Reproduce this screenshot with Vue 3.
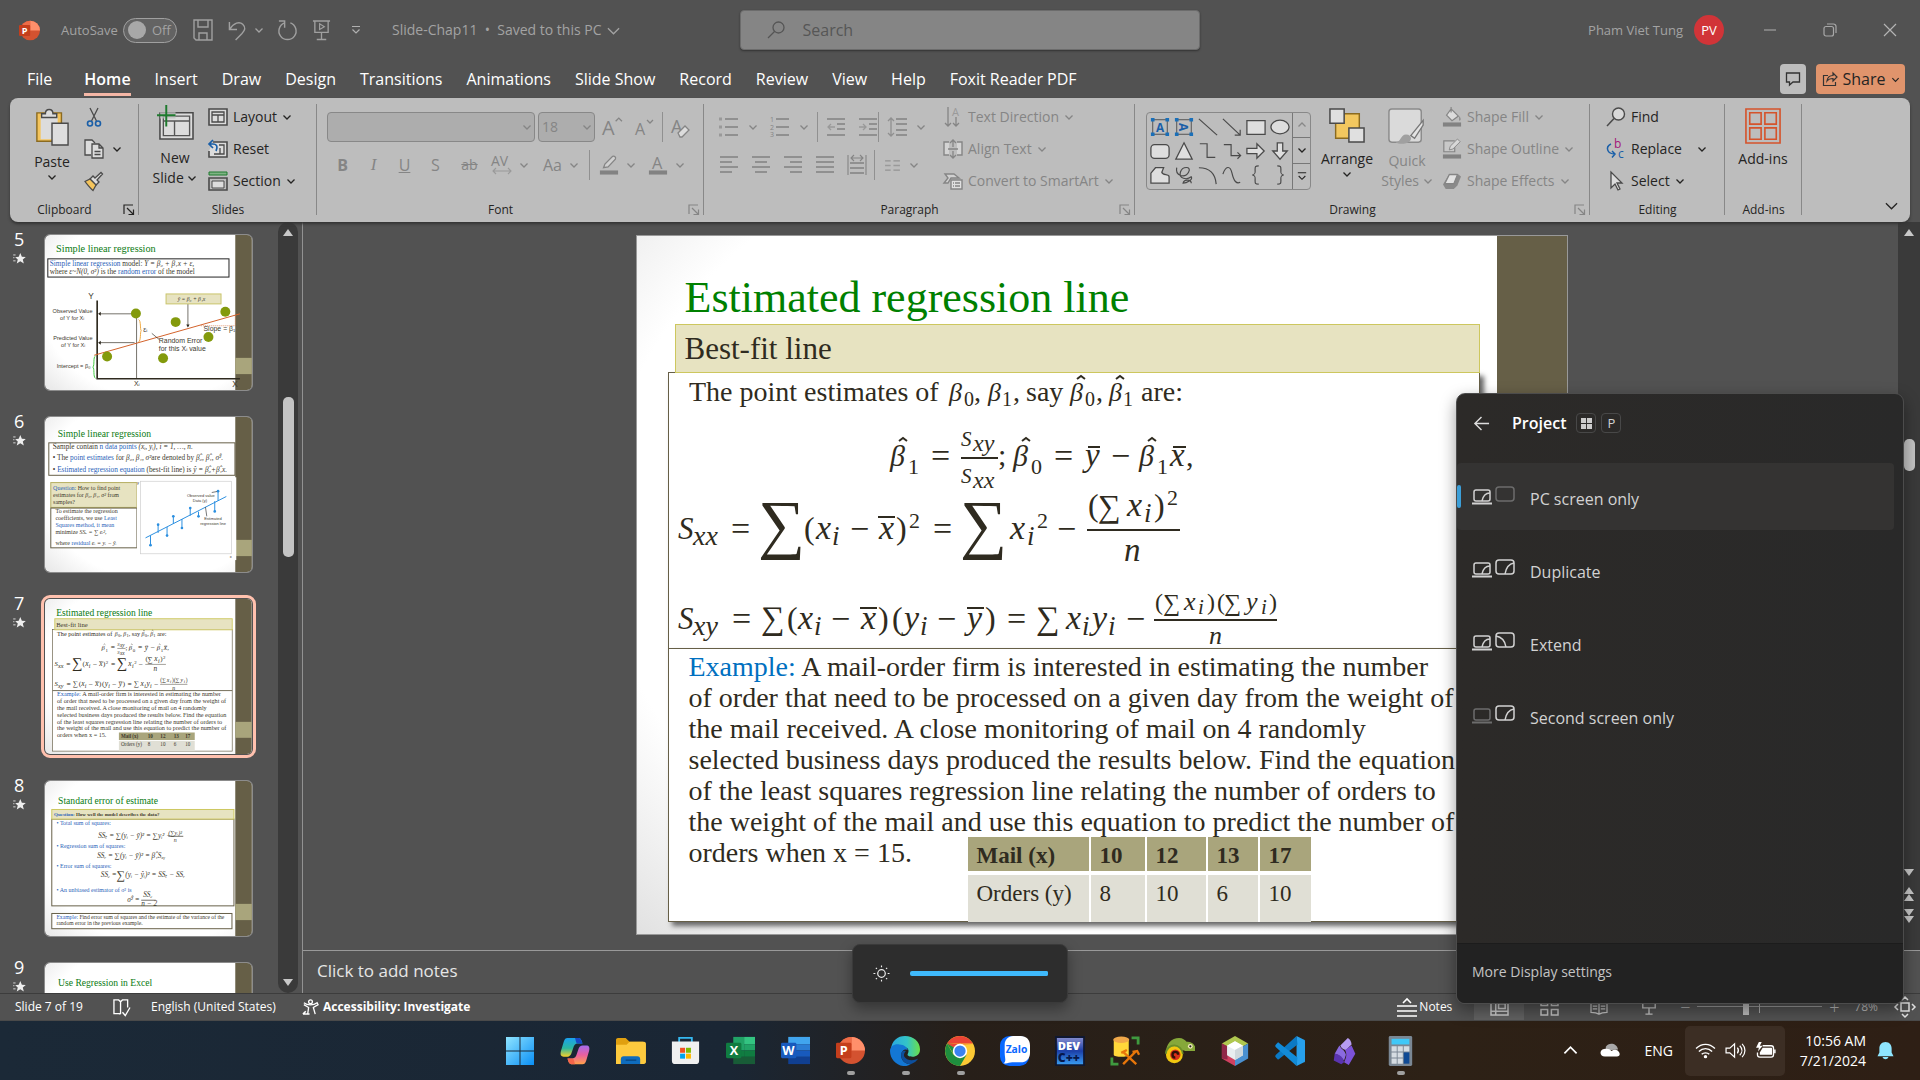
<script setup>
import { h, ref } from 'vue'

/* ---------- icons ---------- */
const k = '#4a4a4a'
const g = '#858585'
const st = (c, w = 1.3) => `fill="none" stroke="${c}" stroke-width="${w}"`
const lines = (rows, c = g) => rows.map(([a, b, y]) => `<path d="M${a} ${y}H${b}" ${st(c, 1.6)}/>`).join('')
const txt = (t, x, y, s, c, extra = '') =>
  `<text x="${x}" y="${y}" font-size="${s}" fill="${c}" font-family="Open Sans, sans-serif" ${extra}>${t}</text>`

const icons = {
  chev: [10, 10, `<path d="M1.500 3.500 5 7 8.500 3.500" fill="none" stroke="currentColor" stroke-width="1.300"/>`],
  chevUp: [10, 10, `<path d="M1.500 6.500 5 3 8.500 6.500" fill="none" stroke="currentColor" stroke-width="1.300"/>`],
  bigChev: [14, 14, `<path d="M1 4.500 7 10.500 13 4.500" fill="none" stroke="currentColor" stroke-width="1.400"/>`],
  launcher: [12, 12, `<path d="M1 10V1H10M4 4l6.500 6.500M10.500 5.500v5h-5" fill="none" stroke="currentColor" stroke-width="1.200"/>`],
  ppt: [32, 32, `<circle cx="17" cy="16" r="15" fill="#d35230"/><path d="M17 1a15 15 0 0 1 15 15H17z" fill="#ff8f6b"/><path d="M17 1a15 15 0 0 0-15 15h15z" fill="#ed6c47"/><rect x="0" y="7.500" width="17" height="17" rx="1.500" fill="#c43e1c"/>${txt('P', 4, 21, 14, '#fff', 'font-weight="700"')}`],
  word: [32, 32, `<rect x="8" y="1" width="24" height="8" fill="#41a5ee"/><rect x="8" y="9" width="24" height="7" fill="#2b7cd3"/><rect x="8" y="16" width="24" height="7" fill="#185abd"/><rect x="8" y="23" width="24" height="8" fill="#103f91"/><rect y="7.500" width="17" height="17" rx="1.500" fill="#185abd"/>${txt('W', 1.5, 21, 14, '#fff', 'font-weight="700"')}`],
  excel: [32, 32, `<path d="M8 1h12v15H8z" fill="#21a366"/><path d="M20 1h12v8H20z" fill="#33c481"/><path d="M20 9h12v7H20z" fill="#21a366"/><path d="M8 16h12v7H8z" fill="#107c41"/><path d="M20 16h12v7H20z" fill="#107c41"/><path d="M8 23h24v8H8z" fill="#185c37"/><rect y="7.500" width="17" height="17" rx="1.500" fill="#107c41"/>${txt('X', 4, 21, 14, '#fff', 'font-weight="700"')}`],
  save: [20, 22, `<path d="M1 1h18v20H3l-2-2zM5 1v7h10V1M6 21v-7h8v7" ${st('#a0a0a0', 1.4)}/>`],
  undo: [20, 22, `<path d="M1.500 2v8h8M2 9.500C6 3 12 1 15.500 4.500s2.500 6-1 10L8 21" ${st('#a0a0a0', 1.5)}/>`],
  redo: [22, 22, `<path d="M2 1h6v7M8 3a9 9 0 1 0 6 0" ${st('#a0a0a0', 1.5)}/>`],
  present: [20, 22, `<path d="M1 1h18M3 1v12h14V1M10 13v7M5 20.500h10" ${st('#a0a0a0', 1.4)}/><path d="M8 4v6l5-3z" ${st('#a0a0a0', 1.2)}/>`],
  qat: [10, 10, `<path d="M1 1.500h8M1.500 4.500 5 8 8.500 4.500" ${st('#b0b0b0', 1.2)}/>`],
  search: [18, 18, `<circle cx="11.500" cy="6.500" r="5.500" ${st('#555', 1.3)}/><path d="M7.500 10.500 1 17" ${st('#555', 1.3)}/>`],
  min: [14, 14, `<path d="M1 7h12" ${st('#a8a8a8', 1.1)}/>`],
  restore: [14, 14, `<rect x="1" y="3.500" width="9.500" height="9.500" rx="2" ${st('#a8a8a8', 1.2)}/><path d="M4 1h6.500A2.500 2.500 0 0 1 13 3.500V10" ${st('#a8a8a8', 1.2)}/>`],
  close: [14, 14, `<path d="M1 1l12 12M13 1 1 13" ${st('#b4b4b4', 1.2)}/>`],
  comment: [16, 16, `<path d="M1.500 2h13v9H8l-3.500 3v-3h-3z" ${st('#333', 1.3)}/>`],
  share: [16, 16, `<path d="M6 4.500H1.500v10h12V11M5 10c.5-4 3-5.500 6-5.500V2l4 4-4 4V7.500C8.500 7.500 6.500 8 5 10z" ${st('#333', 1.2)}/>`],
  paste: [36, 40, `<path d="M2 5h26v30H2z" fill="#f4c45c" stroke="#8a6a20" stroke-width="1.500"/><path d="M6 9h18v24H6z" fill="#dcdcdc"/><path d="M7 10V6h4c0-6 8-6 8 0h4v4z" fill="#dcdcdc" stroke="${k}" stroke-width="1.500"/><path d="M18 16h17v23H18z" fill="#dedede" stroke="${k}" stroke-width="1.500"/>`],
  cut: [20, 20, `<path d="M6 1l6.500 13M14 1 7.500 14" ${st(k)}/><circle cx="6" cy="16.500" r="2.500" ${st('#1a5fa8', 1.6)}/><circle cx="14" cy="16.500" r="2.500" ${st('#1a5fa8', 1.6)}/>`],
  copy: [20, 20, `<path d="M7 16H1V1h7l3 3" fill="#dcdcdc" stroke="${k}" stroke-width="1.300"/><path d="M8 5h7l4 4v10H8zM15 5v4h4" fill="#dcdcdc" stroke="${k}" stroke-width="1.300"/><path d="M10.500 12.500h6M10.500 15.500h6" ${st(k)}/>`],
  brush: [20, 20, `<path d="M11 7 17 1.500l1.500 1.500L13 9l2 2-3 3-6-6 3-3z" fill="#dcdcdc" stroke="${k}" stroke-width="1.300"/><path d="M6 8l6 6-3 5.500C6 17 3 13 1 10.500z" fill="#f4c45c" stroke="${k}" stroke-width="1.200"/>`],
  newSlide: [40, 36, `<path d="M4 8h34v27H4z" fill="#dcdcdc" stroke="${k}" stroke-width="1.600"/><path d="M7.500 11.500h27v20h-27zM7.500 16.500h27M19 16.500v15" ${st('#555', 1.4)}/><path d="M0 6h20v8H4V8z" fill="#bdbdbd" opacity=".7"/><path d="M10.500 0v22M1 10.500h19" ${st('#1e7a2e', 2)}/>`],
  layout: [20, 18, `<path d="M1 1h18v16H1z" fill="#dcdcdc" stroke="${k}" stroke-width="1.600"/><path d="M4 4h12v10H4zM4 7h12M10 7v7" ${st(k)}/>`],
  reset: [20, 18, `<path d="M5 2h14v15H1v-6" fill="#dcdcdc" stroke="${k}" stroke-width="1.600"/><path d="M11 5h5v9H6M12 8v6" ${st(k)}/><path d="M5 0 1 4l4 4M1 4h4c4 0 5 3 3 7" ${st('#1a5fa8', 1.7)}/>`],
  section: [20, 20, `<path d="M1 1h18v3H1z" fill="#7fb384" stroke="#1e7a2e"/><path d="M1 7h18v12H1z" fill="#bdbdbd" stroke="${k}" stroke-width="1.600"/><path d="M4 10h12v7H4z" fill="#dcdcdc" stroke="${k}"/>`],
  growA: [20, 20, txt('A', 0, 18, 19, g) + `<path d="M13 5l3-3 3 3" ${st(g)}/>`],
  shrinkA: [20, 20, txt('A', 1, 18, 16, g) + `<path d="M13 3l3 3 3-3" ${st(g)}/>`],
  clearA: [22, 22, txt('A', 1, 17, 18, g) + `<path d="M8 17l7-7 4 4-7 7h-2z" fill="#dcdcdc" stroke="${g}" stroke-width="1.300"/>`],
  av: [20, 22, txt('AV', -1, 12, 14, g) + `<path d="M1 17h18M4 14l-3 3 3 3M16 14l3 3-3 3" ${st('#9a9a9a', 1.1)}/>`],
  marker: [22, 22, `<path d="M5 14l1.500-4L15 1.500c2-1 4 1 3 3L10 13z" fill="#d0d0d0" stroke="${g}" stroke-width="1.400"/><rect x="1" y="17" width="20" height="4.500" fill="#828282"/>`],
  fontA: [22, 22, txt('A', 4.5, 15, 18, g) + '<rect x="1" y="17" width="20" height="4.500" fill="#828282"/>'],
  bullets: [20, 20, lines([[6, 19, 2], [6, 19, 10], [6, 19, 18]]) + '<path d="M0 .5h3v3H0zM0 8.500h3v3H0zM0 16.500h3v3H0z" fill="#999"/>'],
  numbers: [20, 20, lines([[6, 19, 2], [6, 19, 10], [6, 19, 18]]) + txt('1', 0, 5, 7, g) + txt('2', 0, 13, 7, g) + txt('3', 0, 20, 7, g)],
  outdent: [20, 20, lines([[1, 19, 2], [11, 19, 7], [11, 19, 12], [1, 19, 18]]) + `<path d="M9 10H2M5 7l-3 3 3 3" ${st('#999')}/>`],
  indent: [20, 20, lines([[1, 19, 2], [11, 19, 7], [11, 19, 12], [1, 19, 18]]) + `<path d="M1 10h7M5 7l3 3-3 3" ${st('#999')}/>`],
  spacing: [20, 20, lines([[9, 20, 2], [9, 20, 7], [9, 20, 13], [9, 20, 18]]) + `<path d="M4 1v18M1 4l3-3 3 3M1 16l3 3 3-3" ${st('#909090')}/>`],
  left: [20, 20, lines([[1, 19, 2], [1, 13, 7], [1, 19, 12], [1, 13, 17]])],
  center: [20, 20, lines([[1, 19, 2], [4, 16, 7], [1, 19, 12], [4, 16, 17]])],
  right: [20, 20, lines([[1, 19, 2], [7, 19, 7], [1, 19, 12], [7, 19, 17]])],
  justify: [20, 20, lines([[1, 19, 2], [1, 19, 7], [1, 19, 12], [1, 19, 17]])],
  distribute: [20, 20, lines([[3, 17, 8], [3, 17, 13], [3, 17, 18]]) + `<path d="M1 0v20M19 0v20M4 3h12M7 0 4 3l3 3M13 0l3 3-3 3" ${st(g, 1.1)}/>`],
  columns: [18, 14, lines([[1, 7, 2], [10, 17, 2], [1, 7, 7], [10, 17, 7], [1, 7, 12], [10, 17, 12]], '#9a9a9a')],
  textDir: [20, 20, `<path d="M5 0v19M2 16l3 3 3-3M13 10v9M10 16l3 3 3-3" ${st(g)}/>` + txt('A', 9, 9, 11, '#9a9a9a')],
  alignText: [20, 20, `<path d="M6 3H1v13h5M14 3h5v13h-5" fill="#d4d4d4" stroke="${g}" stroke-width="1.400"/><path d="M10 1v7M10 12v7M7 4l3-3 3 3M7 16l3 3 3-3M5 10h10" ${st(g)}/>`],
  smartArt: [20, 20, `<path d="M2 3h9l5 4H8l-3 5H1l4-5z" fill="#d0d0d0" stroke="${g}" stroke-width="1.400"/><path d="M8 9h11v9H8z" fill="#e0e0e0" stroke="${g}" stroke-width="1.400"/><path d="M12 12h5M12 15h5M10 12h1M10 15h1" ${st(g)}/>`],
  tbox: [22, 22, `<path d="M3 3h16v16H3z" fill="none" stroke="${k}"/><path d="M1 1h4v4H1zM17 1h4v4h-4zM1 17h4v4H1zM17 17h4v4h-4z" fill="#1a6fb8"/>` + txt('A', 6.5, 16, 13, '#1a5fa8', 'font-weight="700"')],
  vbox: [22, 22, `<path d="M3 3h16v16H3z" fill="none" stroke="${k}"/><path d="M1 1h4v4H1zM17 1h4v4h-4zM1 17h4v4H1zM17 17h4v4h-4z" fill="#1a6fb8"/>` + txt('A', 6.5, 16, 13, '#1a5fa8', 'font-weight="700" transform="rotate(90 11 11)"')],
  line: [22, 22, `<path d="M1 2l20 18" ${st(k)}/>`],
  arrow: [22, 22, `<path d="M1 2l19 18M20 14v6h-6" ${st(k)}/>`],
  rect: [22, 22, `<path d="M1 4h20v15H1z" fill="#dedede" stroke="${k}" stroke-width="1.400"/>`],
  oval: [22, 22, `<ellipse cx="11" cy="11" rx="10" ry="7.500" fill="#dedede" stroke="${k}" stroke-width="1.400"/>`],
  round: [22, 22, `<rect x="1" y="4" width="20" height="15" rx="4" fill="#dedede" stroke="${k}" stroke-width="1.400"/>`],
  tri: [22, 22, `<path d="M11 2l9 18H2z" fill="#dedede" stroke="${k}" stroke-width="1.400"/>`],
  elbow: [22, 22, `<path d="M2 3h8v15h9" ${st(k)}/>`],
  elbowA: [22, 22, `<path d="M2 4h8v12h10M17 12.500l3.500 3.500-3.500 3.500" ${st(k)}/>`],
  rArrow: [22, 22, `<path d="M1 8h11V3l8 8-8 8v-5H1z" fill="#dedede" stroke="${k}" stroke-width="1.400"/>`],
  dArrow: [22, 22, `<path d="M8 2h6v9h5l-8 9-8-9h5z" fill="#dedede" stroke="${k}" stroke-width="1.400"/>`],
  blob: [22, 22, `<path d="M1 20V9l5-6h9l-2 5c1 4 8 1 8 5v7z" fill="#dedede" stroke="${k}" stroke-width="1.400"/>`],
  scribble: [22, 22, `<path d="M3 3c-2 9 9 12 13 5S9 1 7 8s7 9 12 5c2 3-5 7-9 7 1-5 9-4 9 0" ${st(k)}/>`],
  arc: [22, 22, `<path d="M1 3c11 0 18 6 19 18" ${st(k)}/>`],
  curve: [22, 22, `<path d="M1 10C4 1 9 0 11 9s5 12 9 10" ${st(k)}/>`],
  lbrace: [22, 22, `<path d="M14 1c-4 0-4 1-4 4s1 5-3 6c4 1 3 3 3 6s0 4 4 4" ${st(k)}/>`],
  rbrace: [22, 22, `<path d="M8 1c4 0 4 1 4 4s-1 5 3 6c-4 1-3 3-3 6s0 4-4 4" ${st(k)}/>`],
  more: [12, 12, `<path d="M1 2h10M2 6l4 4 4-4" fill="none" stroke="#252423" stroke-width="1.300"/>`],
  arrange: [38, 38, `<path d="M7 6h25v26H7z" fill="#f2c75f" stroke="#8a6a20" stroke-width="1.500"/><path d="M1 1h15v15H1zM21 21h16v15H21z" fill="#e0e0e0" stroke="${k}" stroke-width="1.600"/>`],
  quick: [40, 40, `<rect x="1" y="1" width="34" height="35" rx="3" fill="#dadada" stroke="#8a8a8a" stroke-width="1.500"/><path d="M37 13 24 29l4 3 9-14z" fill="#e4e4e4" stroke="#777" stroke-width="1.400"/><path d="M8 36c6 0 5-8 11-8 7 0 7 8 0 9-4 1-8 1-11-1z" fill="#a0a0a0"/>`],
  fill: [22, 22, `<path d="M10 2l8 8-7 5-6-6zM10 0v6" fill="#dcdcdc" stroke="${g}" stroke-width="1.300"/><path d="M19 10c2 3 2 5 0 5" fill="${g}"/><rect x="1" y="17" width="20" height="4.500" fill="#828282"/>`],
  outline: [22, 22, `<path d="M14 2H2v12h12V9" fill="#c8c8c8" stroke="${g}" stroke-width="1.300"/><path d="M8 12l1-4 8-8 3 3-8 8z" fill="#d8d8d8" stroke="${g}"/><rect x="1" y="17" width="20" height="4.500" fill="#828282"/>`],
  effects: [22, 20, `<path d="M8 2h9l4 3-4 10-4 4H4l-3-5z" fill="#8a8a8a"/><path d="M8 3h9l-4 10H3z" fill="#e2e2e2" stroke="${g}" stroke-width="1.300"/>`],
  find: [20, 20, `<circle cx="12.500" cy="7" r="6" fill="#d8d8d8" stroke="${k}" stroke-width="1.400"/><path d="M8 11.500 1 19" ${st(k, 1.5)}/>`],
  replace: [20, 20, txt('b', 8, 9, 12, '#a4157a') + txt('c', 12, 19, 12, '#1a5fa8') + `<path d="M5 5c-6 3-4 10 4 10M6 12l3 3-3 3.500" ${st('#1a5fa8', 1.5)}/>`],
  select: [20, 20, `<path d="M5 1v16l4-4 3 6 2-1-3-6h5z" fill="#dcdcdc" stroke="${k}" stroke-width="1.300"/>`],
  addins: [38, 38, `<path d="M1 1h36v36H1z" ${st('#d5532b', 1.7)}/><path d="M5 5h12v12H5zM21 5h12v12H21zM5 21h12v12H5zM21 21h12v12H21z" ${st('#d5532b', 1.7)}/>`],
  star: [16, 14, `<path d="M9 0l2 4.700 5 .3-3.800 3.300L13.500 13.500 9 10.600 4.500 13.500 5.800 8.300 2.500 5.300l4.500-.6z" fill="#eee"/><path d="M0 2.500h3M0 6h1.500M0 10h3" stroke="#ddd" stroke-width="1.200"/>`],
  up: [12, 9, '<path d="M6 1l5 7H1z" fill="#c8c8c8"/>'],
  down: [12, 9, '<path d="M6 8 1 1h10z" fill="#c8c8c8"/>'],
  dblUp: [12, 15, '<path d="M6 0l5 7H1zM6 7l5 7H1z" fill="#c8c8c8"/>'],
  dblDown: [12, 15, '<path d="M6 8 1 1h10zM6 15 1 8h10z" fill="#c8c8c8"/>'],
  book: [20, 18, `<path d="M9 15.500H2V1h5l2 2 2-2h5.500v8M9 3v13M9 16l-2-.5M11 14l3 3.500L19 9" ${st('#fff', 1.4)}/>`],
  access: [18, 18, `<circle cx="9" cy="3" r="2" ${st('#fff', 1.4)}/><path d="M2 4c4 3 10 3 14 0l1 2-5 3 2 7M6 16l1-7-5-3" ${st('#fff', 1.4)}/><path d="M1 16h7M4 13l-3 3" ${st('#fff', 1.6)}/>`],
  notes: [20, 20, `<path d="M0 9h20M0 14h20M0 19h20M6 6l4-4 4 4" ${st('#fff', 1.6)}/>`],
  normal: [20, 18, `<path d="M1 1h18v16H1zM6 1v16M1 13h18M9 5h7v5H9z" ${st('#ccc', 1.6)}/>`],
  sorter: [20, 18, `<path d="M1 1h7v6H1zM12 1h7v6h-7zM1 11h7v6H1zM12 11h7v6h-7z" ${st('#c0c0c0', 1.6)}/>`],
  reading: [20, 18, `<path d="M10 3v13M10 3C7 1 4 1 1 1v14c3 0 6 0 9 2 3-2 6-2 9-2V1c-3 0-6 0-9 2M3 5h5M3 8h5M3 11h5M12 5h5M12 8h5M12 11h5" ${st('#c0c0c0', 1.4)}/>`],
  show: [18, 18, `<path d="M0 1h18M2 1v9h14V1M9 10v7M5 17h8" ${st('#c0c0c0', 1.6)}/>`],
  fit: [20, 20, `<path d="M6 6h8v8H6zM7 3l3-3 3 3M7 17l3 3 3-3M3 7l-3 3 3 3M17 7l3 3-3 3" ${st('#e4e4e4', 1.5)}/>`],
  back: [18, 18, `<path d="M17 9H2M9 2 2 9l7 7" ${st('#ddd', 1.5)}/>`],
  winkey: [12, 12, '<path d="M0 0h5.500v5.500H0zM6.500 0H12v5.500H6.500zM0 6.500h5.500V12H0zM6.500 6.500H12V12H6.500z" fill="#ccc"/>'],
  sun: [18, 18, `<circle cx="9" cy="9" r="4" ${st('#eee', 1.3)}/><path d="M9 .5v2M9 15.500v2M.5 9h2M15.500 9h2M3 3l1.200 1.200M13.800 13.800 15 15M3 15l1.200-1.200M13.800 4.200 15 3" ${st('#eee', 1.2)}/>`],
  start: [30, 30, '<defs><linearGradient id="wn" x1="0" y1="0" x2="1" y2="1"><stop offset="0" stop-color="#8fe4ff"/><stop offset="1" stop-color="#0a8ff5"/></linearGradient></defs><path d="M1 1h13.500v13.500H1zM15.500 1H29v13.500H15.500zM1 15.500h13.500V29H1zM15.500 15.500H29V29H15.500z" fill="url(#wn)"/>'],
  copilot: [32, 32, '<defs><linearGradient id="ca" x1="0" y1="0" x2="0" y2="1"><stop offset="0" stop-color="#1aa0f0"/><stop offset=".55" stop-color="#2bb7a0"/><stop offset="1" stop-color="#f6d12a"/></linearGradient><linearGradient id="cb" x1="0" y1="0" x2="0" y2="1"><stop offset="0" stop-color="#a36cf0"/><stop offset=".5" stop-color="#e85fa0"/><stop offset="1" stop-color="#ffa04a"/></linearGradient></defs><path d="M8 2h12c2 0 3 2 4 6h-5c-3 0-4 2-5 5l-2 6c-1 2-2 3-4 3H4c-3 0-4-2-3-6L4 6c1-3 2-4 4-4z" fill="url(#ca)"/><path d="M16 2h4c2 0 3 2 4 6h-5c-2 0-2-3-3-6z" fill="#1747c4"/><path d="M24 30H12c-2 0-3-2-4-6h5c3 0 4-2 5-5l2-6c1-2 2-3 4-3h4c3 0 4 2 3 6l-3 10c-1 3-2 4-4 4z" fill="url(#cb)"/><path d="M16 30h-4c-2 0-3-2-4-6h5c2 0 2 3 3 6z" fill="#f4654a"/>'],
  folder: [32, 30, '<path d="M1 4c0-1 1-2 2-2h8l4 4h14v5H1z" fill="#e0a010"/><path d="M1 9h11l3-3h15c1 0 2 1 2 2v19c0 1-1 2-2 2H1z" fill="#fdca3e"/><path d="M6 29v-5c0-2 1-3 3-3h14c2 0 3 1 3 3v5z" fill="#0f6cbd"/><path d="M11 25h11" stroke="#0a4a86" stroke-width="1.500"/>'],
  store: [32, 32, '<path d="M9 8V2h14v6" fill="none" stroke="#35b8f0" stroke-width="2"/><path d="M1 6h30v21c0 3-1 4-4 4H5c-3 0-4-1-4-4z" fill="#f0f0f0"/><path d="M10 13h5.500v5.500H10z" fill="#f25022"/><path d="M16.500 13H22v5.500h-5.500z" fill="#7fba00"/><path d="M10 19.500h5.500V25H10z" fill="#00a4ef"/><path d="M16.500 19.500H22V25h-5.500z" fill="#ffb900"/>'],
  edge: [32, 32, '<defs><linearGradient id="ea" x1="0" y1="0" x2="1" y2="0"><stop offset="0" stop-color="#2aa8e0"/><stop offset=".55" stop-color="#33c4c8"/><stop offset="1" stop-color="#6be04a"/></linearGradient></defs><path d="M1 14C2 5 8 0 16 0c9 0 16 6 16 14 0 6-4 8-8 8s-6-1-5-3c2-4 0-7-4-7-6-1-10 0-14 2z" fill="url(#ea)"/><path d="M0 16c0-5 5-8 10-7 5 0 8 3 9 6-3-2-8 1-7 7 1 5 5 8 10 8-3 2-6 2-8 2C6 31 0 24 0 16z" fill="#1377d4"/><path d="M12 18c-1 6 3 12 10 12 4-1 7-4 8-6-5 3-12 2-14-1-2-2-1-5 1-7-2-1-4 0-5 2z" fill="#0d4f9c"/>'],
  chrome: [32, 32, '<circle cx="16" cy="16" r="16" fill="#fcc934"/><path d="M2.200 8A16 16 0 0 1 29.800 8H16z" fill="#ea4335"/><path d="M2.200 8A16 16 0 0 0 16 32l7-12H9z" fill="#1e8e3e"/><path d="M2.200 8 9.500 20 16 9z" fill="#1e8e3e"/><path d="M2.200 8 9 12l7-3h13.800z" fill="#ea4335"/><circle cx="16" cy="16" r="7.700" fill="#fff"/><circle cx="16" cy="16" r="6" fill="#3b82f0"/>'],
  zalo: [32, 32, '<rect width="31" height="32" rx="10" fill="#0a68ff"/><path d="M14 0h8c6 0 10 4 10 10v8c0 6-4 10-10 10h-9c-3 0-6 2-9 1 3-2 1-6 1-11V9c0-5 4-9 9-9z" fill="#fff"/>' + txt('Zalo', 6, 18, 11, '#0a68ff', 'font-weight="700"')],
  dev: [32, 32, '<defs><linearGradient id="dv" x1="0" y1="0" x2="0" y2="1"><stop offset="0" stop-color="#8a90d0"/><stop offset=".5" stop-color="#1c3fa8"/><stop offset="1" stop-color="#3aa0f4"/></linearGradient></defs><path d="M1 1h30v30H1z" fill="url(#dv)" stroke="#101830" stroke-width="2"/>' + txt('DEV', 3, 15, 12, '#fff', 'font-weight="800"') + txt('C++', 3, 28, 13, '#07184a', 'font-weight="800"')],
  sql: [32, 32, '<path d="M4 4v16c0 3 16 3 16 0V4z" fill="#ffd83a"/><ellipse cx="12" cy="4" rx="8.500" ry="3.500" fill="#f0a84a"/><path d="M23 2h7v7M9 30H2v-7" fill="none" stroke="#3f9a3f" stroke-width="3"/><path d="M14 17l14 13M28 16 14 30M24 17l5-1 2 4M12 18l6-3" fill="none" stroke="#e8760a" stroke-width="2.500"/>'],
  chameleon: [32, 32, '<path d="M1 18C1 8 7 2 15 2c4 0 6 2 8 4 4 0 7 1 9 5v5h-9c-4 0-6-3-10-3-7 0-8 3-9 8z" fill="#86a83a"/><circle cx="10" cy="20" r="9" fill="#f2c810"/><path d="M1 19c0-6 5-9 9-9s9 4 9 9" fill="none" stroke="#6b8f2a" stroke-width="2"/><circle cx="11" cy="20" r="5.500" fill="#d8301a"/><path d="M11 23a3 3 0 1 1 3-3" fill="none" stroke="#301008" stroke-width="2.500"/><circle cx="27" cy="11" r="2.500" fill="#f4ecc0"/><circle cx="27" cy="11" r="1.200" fill="#222"/>'],
  netbeans: [32, 32, '<path d="M16 0l14 8-14 8L2 8z" fill="#b0c850"/><path d="M2 8l14 8v16L2 24z" fill="#d04060"/><path d="M2 8l6 3v14l-6-1z" fill="#902848"/><path d="M30 8v16l-14 8V16z" fill="#4a90d0"/><path d="M16 5.500l8.500 5v10L16 25.500l-8.500-5v-10z" fill="#e8eef0"/><path d="M16 5.500l8.500 5L16 15 7.500 10.500z" fill="#fff"/><path d="M16 15v10.500l8.500-5v-10z" fill="#cfd8dc"/>'],
  vscode: [32, 32, '<path d="M23 0v32l8-4c1 0 1-1 1-2V6c0-1 0-2-1-2z" fill="#27a0ec"/><path d="M23 0 1 20c-1 1-1 2 0 3l2 2c1 0 1 0 2-1L24 9z" fill="#0b79c4"/><path d="M23 32 1 12c-1-1-1-2 0-3l2-2c1 0 1 0 2 1l19 15z" fill="#128bd8"/>'],
  obsidian: [32, 32, '<path d="M19 2c2 1 4 4 4 7l-6 6c-3-1-5-2-6-5z" fill="#b69cf0"/><path d="M10 10c2 4 6 5 7 10l-2 6C10 20 6 19 5 19z" fill="#8a6ae0"/><path d="M5 19c5 0 9 4 10 9l-3 2-8-4z" fill="#5a34b0"/><path d="M23 10l4 9-7 12-5-3c3-6 3-9 1-13z" fill="#7c52d8"/>'],
  calc: [32, 34, '<rect x="4" y="1" width="25" height="32" rx="1.500" fill="#7a8794"/><path d="M7 4h19v6H7z" fill="#3fc8f8"/><path d="M7 12h5.500v5.500H7zM13.500 12H19v5.500h-5.500zM20 12h6v5.500h-6zM7 18.500h5.500v5.500H7zM13.500 18.500H19v5.500h-5.500zM7 25h5.500v5.500H7zM13.500 25H19v5.500h-5.500z" fill="#d5dce2"/><path d="M20 18.500h6v12h-6z" fill="#0f4a94"/>'],
  trayUp: [16, 16, `<path d="M1.500 11 8 4.500l6.500 6.500" ${st('#fff', 1.8)}/>`],
  cloud: [22, 16, '<path d="M6 4c3-5 12-4 13 3l-13 1z" fill="#a8a8a8"/><path d="M5 14.500c-6 0-6-7-1-8 4-1 6 0 8 2 3-2 6-2 8 1 2 3 0 5-3 5z" fill="#fff"/>'],
  wifi: [22, 18, `<path d="M1 7C7 1 15 1 21 7M4 10c4-4 10-4 14 0M7 13c2-2 6-2 8 0" ${st('#fff', 1.5)}/><circle cx="11" cy="15.500" r="1.800" fill="#fff"/>`],
  volume: [22, 18, `<path d="M1 6.500h4L10 2v14l-5-4.500H1zM13 6c1.500 2 1.500 4 0 6M15.500 4c3 3 3 7 0 10M18 2c4 4 4 10 0 14" ${st('#fff', 1.3)}/>`],
  battery: [22, 18, `<path d="M8 4h9c1.500 0 2.500 1 2.500 2.500v7c0 1.500-1 2.500-2.500 2.500H5c-1.500 0-2.500-1-2.500-2.500V11M21 8v4" ${st('#fff', 1.4)}/><path d="M5 11l3-5h9c.5 0 1 .5 1 1v6.500H5zM4 0 1 6h3L3 10l5-6H5l2-4z" fill="#fff"/>`],
  bell: [18, 20, '<path d="M9 1c4 0 6.500 3 6.500 7v4l2 4H.5l2-4V8C2.500 4 5 1 9 1zM6 17h6c0 3-6 3-6 0z" fill="#8fe6ff"/>'],
}
const Ico = (p) => {
  const [w, hh, body] = icons[p.n]
  const wd = +(p.w || w)
  return h('svg', { viewBox: `0 0 ${w} ${hh}`, width: wd, height: Math.round((wd * hh) / w), innerHTML: body, 'aria-hidden': 'true' })
}

/* laptop + monitor pair for each projection mode */
const Proj = (p) => {
  const on = '#d2d2d2'
  const off = '#6c6c6c'
  const a = p.m === 3 ? off : on
  const b = p.m === 0 ? off : on
  let s = `<rect x="2" y="4" width="16" height="11" rx="2" ${st(a, 1.5)}/><path d="M0 17.500h20" ${st(a, 2)}/><rect x="24" y="1" width="18" height="14" rx="3" ${st(b, 1.5)}/>`
  if (p.m !== 3) s += `<path d="M18 7c-5 0-7 3-8 8" ${st(a, 1.5)}/>`
  if (p.m === 1 || p.m === 3) s += `<path d="M42 4c-6 1-8 5-9 11" ${st(b, 1.5)}/>`
  if (p.m === 2) s += `<path d="M24 4c6 1 9 5 10 11" ${st(b, 1.5)}/>`
  return h('svg', { viewBox: '0 0 43 20', width: 43, height: 20, innerHTML: s, 'aria-hidden': 'true' })
}

/* ---------- slide formulas, in slide units (931 x 699) ---------- */
const I = 'italic'
const N = 'normal'
const formula = [
  ['The point estimates of', 53, 166, 28, N], ['β', 313, 166, 26, I], ['0', 328, 171, 20, N], [',', 338, 166, 28, N],
  ['β', 352, 166, 26, I], ['1', 366, 171, 20, N], [',', 377, 166, 28, N], ['say', 390, 166, 28, N], ['β', 434, 166, 26, I],
  ['0', 449, 171, 20, N], [',', 460, 166, 28, N], ['β', 473, 166, 26, I], ['1', 487, 171, 20, N], ['are:', 505, 166, 28, N],
  ['β', 254, 231, 30, I], ['1', 272, 239, 22, N], ['=', 295, 232, 34, N], ['S', 325, 211, 21, I], ['xy', 337, 216, 24, I],
  ['S', 325, 248, 21, I], ['xx', 337, 253, 24, I], [';', 362, 230, 30, N], ['β', 377, 231, 30, I], ['0', 395, 239, 22, N],
  ['=', 418, 232, 34, N], ['y', 449, 231, 33, I], ['−', 475, 232, 34, N], ['β', 503, 231, 30, I], ['1', 521, 239, 22, N],
  ['x', 534, 231, 33, I], [',', 550, 231, 30, N],
  ['S', 42, 304, 31, I], ['xx', 57, 310, 28, I], ['=', 95, 305, 34, N], ['∑', 122, 311, 66, N], ['(', 168, 304, 32, N],
  ['x', 180, 304, 34, I], ['i', 196, 310, 27, I], ['−', 214, 305, 34, N], ['x', 243, 304, 34, I], [')', 260, 304, 32, N],
  ['2', 273, 293, 22, N], ['=', 297, 305, 34, N], ['∑', 324, 311, 66, N], ['x', 374, 304, 34, I], ['i', 391, 310, 27, I],
  ['2', 401, 293, 22, N], ['−', 421, 305, 34, N], ['(', 452, 281, 32, N], ['∑', 462, 282, 32, N], ['x', 491, 281, 34, I],
  ['i', 508, 287, 27, I], [')', 518, 281, 32, N], ['2', 531, 270, 22, N], ['n', 488, 326, 33, I],
  ['S', 42, 394, 31, I], ['xy', 57, 400, 28, I], ['=', 96, 395, 34, N], ['∑', 125, 394, 33, N], ['(', 151, 394, 32, N],
  ['x', 162, 394, 34, I], ['i', 178, 400, 27, I], ['−', 195, 395, 34, N], ['x', 225, 394, 34, I], [')', 242, 394, 32, N],
  ['(', 256, 394, 32, N], ['y', 268, 394, 34, I], ['i', 284, 400, 27, I], ['−', 301, 395, 34, N], ['y', 331, 394, 34, I],
  [')', 349, 394, 32, N], ['=', 371, 395, 34, N], ['∑', 400, 394, 33, N], ['x', 430, 394, 34, I], ['i', 446, 400, 27, I],
  ['y', 456, 394, 34, I], ['i', 472, 400, 27, I], ['−', 490, 395, 34, N], ['(', 519, 375, 24, N], ['∑', 527, 376, 24, N],
  ['x', 548, 375, 26, I], ['i', 562, 379, 21, I], [')', 571, 375, 24, N], ['(', 581, 375, 24, N], ['∑', 588, 376, 24, N],
  ['y', 610, 375, 26, I], ['i', 625, 379, 21, I], [')', 633, 375, 24, N], ['n', 573, 409, 26, I],
]
const rules = [[325, 362, 223], [452, 464, 212], [537, 550, 212], [242, 259, 282], [451, 544, 295], [224, 241, 373], [331, 348, 373], [518, 641, 385]]
const hats = [[445, 143], [484, 143], [267, 205], [390, 205], [516, 205]]
const Formulas = () =>
  h('g', { fill: '#2f2b20', 'font-family': 'Liberation Serif, Times New Roman, serif' }, [
    ...formula.map(([t, x, y, s, f]) => h('text', { x, y, 'font-size': s, 'font-style': f }, t)),
    ...rules.map(([a, b, y]) => h('path', { d: `M${a} ${y}H${b}`, stroke: '#2f2b20', 'stroke-width': 2 })),
    ...hats.map(([x, y]) => h('path', { d: `M${x - 4} ${y + 1}l4-3 4 3`, fill: 'none', stroke: '#2f2b20', 'stroke-width': 2 })),
  ])

const example = [
  'A mail-order firm is interested in estimating the number',
  'of order that need to be processed on a given day from the weight of',
  'the mail received. A close monitoring of mail on 4 randomly',
  'selected business days produced the results below. Find the equation',
  'of the least squares regression line relating the number of orders to',
  'the weight of the mail and use this equation to predict the number of',
  'orders when x = 15.',
]

/* ---------- window data ---------- */
const tabs = ['File', 'Home', 'Insert', 'Draw', 'Design', 'Transitions', 'Animations', 'Slide Show', 'Record', 'Review', 'View', 'Help', 'Foxit Reader PDF']
const shapes = ['tbox', 'vbox', 'line', 'arrow', 'rect', 'oval', 'round', 'tri', 'elbow', 'elbowA', 'rArrow', 'dArrow', 'blob', 'scribble', 'arc', 'curve', 'lbrace', 'rbrace']
const modes = ['PC screen only', 'Duplicate', 'Extend', 'Second screen only']
const apps = [
  ['start', 'Start', 30], ['copilot', 'Copilot', 30], ['folder', 'File Explorer', 31], ['store', 'Microsoft Store', 29], ['excel', 'Excel', 29],
  ['word', 'Word', 29], ['ppt', 'PowerPoint', 29, 1], ['edge', 'Edge', 30, 1], ['chrome', 'Chrome', 30, 1], ['zalo', 'Zalo', 30], ['dev', 'Dev-C++', 30],
  ['sql', 'SQL tools', 30], ['chameleon', 'Chameleon', 30], ['netbeans', 'NetBeans', 30], ['vscode', 'VS Code', 30], ['obsidian', 'Obsidian', 30], ['calc', 'Calculator', 30, 1],
]
const brightness = ref(100)
const zoom = ref(38)
</script>

<template>
  <div class="screen">
    <header class="titlebar">
      <div class="quick">
        <Ico n="ppt" w="21" class="logo" />
        <span class="autosave">AutoSave</span>
        <button class="toggle" aria-label="AutoSave off"><i></i>Off</button>
        <button aria-label="Save"><Ico n="save" w="20" /></button>
        <button class="undo" aria-label="Undo"><Ico n="undo" w="19" /><Ico n="chev" /></button>
        <button class="redo" aria-label="Redo"><Ico n="redo" w="21" /></button>
        <button class="present" aria-label="Present"><Ico n="present" w="19" /></button>
        <button class="qat" aria-label="Customize"><Ico n="qat" /></button>
        <span class="doc">Slide-Chap11&nbsp; •&nbsp; Saved to this PC <Ico n="bigChev" w="13" /></span>
      </div>
      <label class="search"><Ico n="search" w="18" /><input type="search" placeholder="Search" aria-label="Search" /></label>
      <div class="account">
        <span>Pham Viet Tung</span>
        <span class="avatar">PV</span>
        <button class="win" aria-label="Minimize"><Ico n="min" /></button>
        <button class="win" aria-label="Restore"><Ico n="restore" /></button>
        <button class="win" aria-label="Close"><Ico n="close" /></button>
      </div>
    </header>

    <nav class="tabs">
      <button v-for="t in tabs" :key="t" :class="{ active: t === 'Home', file: t === 'File' }">{{ t }}</button>
      <span class="grow"></span>
      <button class="cbtn" aria-label="Comments"><Ico n="comment" /></button>
      <button class="share"><Ico n="share" />Share<Ico n="chev" w="9" /></button>
    </nav>

    <section class="ribbon">
      <div class="grp clip">
        <div class="body">
          <button class="big"><Ico n="paste" w="34" /><span>Paste</span><Ico n="chev" /></button>
          <div class="stack">
            <button aria-label="Cut"><Ico n="cut" /></button>
            <button aria-label="Copy"><Ico n="copy" /><Ico n="chev" class="wide" /></button>
            <button aria-label="Format Painter"><Ico n="brush" /></button>
          </div>
        </div>
        <h6 class="with-launch">Clipboard</h6><Ico n="launcher" class="launch" />
      </div>
      <div class="grp slides">
        <div class="body">
          <button class="big"><Ico n="newSlide" w="39" /><span>New<br />Slide <Ico n="chev" /></span></button>
          <div class="stack">
            <button><Ico n="layout" />Layout<Ico n="chev" /></button>
            <button><Ico n="reset" />Reset</button>
            <button><Ico n="section" />Section<Ico n="chev" /></button>
          </div>
        </div>
        <h6>Slides</h6>
      </div>
      <div class="grp font off">
        <div class="body col">
          <div class="row r1">
            <span class="pick face"><select aria-label="Font"><option></option></select><Ico n="chev" /></span>
            <span class="pick size"><select aria-label="Font size"><option>18</option></select><Ico n="chev" /></span>
            <button aria-label="Grow"><Ico n="growA" w="21" /></button>
            <button aria-label="Shrink"><Ico n="shrinkA" w="20" /></button>
            <i class="bar"></i>
            <button aria-label="Clear formatting"><Ico n="clearA" /></button>
          </div>
          <div class="row r2">
            <button class="ch"><b>B</b></button>
            <button class="ch it">I</button>
            <button class="ch"><u>U</u></button>
            <button class="ch">S</button>
            <button class="ch ab"><s>ab</s></button>
            <button class="dd"><Ico n="av" /><Ico n="chev" /></button>
            <button class="dd aa">Aa<Ico n="chev" /></button>
            <i class="bar"></i>
            <button class="dd"><Ico n="marker" w="20" /><Ico n="chev" /></button>
            <button class="dd"><Ico n="fontA" w="20" /><Ico n="chev" /></button>
          </div>
        </div>
        <h6 class="with-launch">Font</h6><Ico n="launcher" class="launch" />
      </div>
      <div class="grp para off">
        <div class="body">
          <div class="col">
            <div class="row r1">
              <button class="dd"><Ico n="bullets" /><Ico n="chev" /></button>
              <button class="dd"><Ico n="numbers" /><Ico n="chev" /></button>
              <i class="bar"></i>
              <button aria-label="Outdent"><Ico n="outdent" /></button>
              <button aria-label="Indent"><Ico n="indent" /></button>
              <i class="bar"></i>
              <button class="dd"><Ico n="spacing" /><Ico n="chev" /></button>
            </div>
            <div class="row r2">
              <button v-for="a in ['left', 'center', 'right', 'justify', 'distribute']" :key="a" :aria-label="a"><Ico :n="a" /></button>
              <i class="bar"></i>
              <button class="dd"><Ico n="columns" w="17" /><Ico n="chev" /></button>
            </div>
          </div>
          <div class="stack">
            <button><Ico n="textDir" />Text Direction<Ico n="chev" /></button>
            <button><Ico n="alignText" />Align Text<Ico n="chev" /></button>
            <button><Ico n="smartArt" />Convert to SmartArt<Ico n="chev" /></button>
          </div>
        </div>
        <h6 class="with-launch">Paragraph</h6><Ico n="launcher" class="launch" />
      </div>
      <div class="grp draw">
        <div class="body">
          <div class="gallery">
            <div class="cells"><button v-for="s in shapes" :key="s" :aria-label="s"><Ico :n="s" w="20" /></button></div>
            <div class="scroll">
              <button aria-label="Up" class="dim"><Ico n="chevUp" /></button>
              <button aria-label="Down"><Ico n="chev" /></button>
              <button aria-label="More"><Ico n="more" w="10" /></button>
            </div>
          </div>
          <button class="big"><Ico n="arrange" w="36" /><span>Arrange</span><Ico n="chev" /></button>
          <button class="big off"><Ico n="quick" w="38" /><span>Quick<br />Styles <Ico n="chev" /></span></button>
          <div class="stack off">
            <button><Ico n="fill" w="20" />Shape Fill<Ico n="chev" /></button>
            <button><Ico n="outline" w="20" />Shape Outline<Ico n="chev" /></button>
            <button><Ico n="effects" w="20" />Shape Effects<Ico n="chev" /></button>
          </div>
        </div>
        <h6 class="with-launch">Drawing</h6><Ico n="launcher" class="launch off" />
      </div>
      <div class="grp edit">
        <div class="body">
          <div class="stack">
            <button><Ico n="find" />Find</button>
            <button><Ico n="replace" />Replace<Ico n="chev" class="wide" /></button>
            <button><Ico n="select" />Select<Ico n="chev" /></button>
          </div>
        </div>
        <h6>Editing</h6>
      </div>
      <div class="grp addin">
        <div class="body"><button class="big"><Ico n="addins" w="36" /><span>Add-ins</span></button></div>
        <h6>Add-ins</h6>
      </div>
      <button class="collapse" aria-label="Collapse ribbon"><Ico n="bigChev" w="13" /></button>
    </section>

    <main class="work">
      <aside class="thumbs">
        <ol>
          <li>
            <div class="num">5<Ico n="star" w="13" /></div>
            <svg class="thumb" viewBox="0 0 624 468">
              <rect class="tb" x="574" width="50" height="468" /><rect class="tl" x="574" y="371" width="50" height="49" />
              <text class="tt t5" x="33" y="50">Simple linear regression</text>
              <rect x="8" y="72" width="547" height="55" class="bx dark" />
              <text x="14" y="93"><tspan class="bl">Simple linear regression</tspan> model:  <tspan class="i">Y = β₀ + β₁x + ε,</tspan></text>
              <text x="14" y="118">where <tspan class="i">ε~N(0, σ²)</tspan> is the <tspan class="bl">random error</tspan> of the model</text>
              <path d="M157 198V434H588" class="ax" /><path d="M276 238V434" class="ax thin" />
              <path d="M148 363 588 238" stroke="#d3622a" stroke-width="3" fill="none" />
              <path d="M470 274H574V240" stroke="#d3622a" stroke-width="2" stroke-dasharray="3 3" fill="none" />
              <path d="M270 238H162M270 325H162M431 208V276M345 316 322 297" class="ar" />
              <path d="M168 232l-8 6 8 6zM168 319l-8 6 8 6zM426 270l5 9 5-9z" fill="#2f2b20" />
              <rect x="365" y="178" width="166" height="30" fill="#e7e3c1" stroke="#c9c46a" stroke-width="3" />
              <text x="400" y="199" class="i sm">ŷ = β₀ + β₁x</text>
              <path d="M282 255c8 4 4 30 8 34-4 4 0 30-8 34" stroke="#f0a840" stroke-width="3" fill="none" />
              <path d="M152 365c-8 4-2 28-8 34 6 4 0 28 8 34" stroke="#4c4" stroke-width="3" fill="none" />
              <g fill="#839a0c"><circle cx="274" cy="237" r="15" /><circle cx="394" cy="263" r="15" /><circle cx="544" cy="232" r="15" /><circle cx="493" cy="308" r="15" /><circle cx="356" cy="372" r="15" /><circle cx="187" cy="367" r="15" /></g>
              <g class="sans"><text x="130" y="193" class="lg">Y</text><text x="565" y="458" class="lg">X</text><text x="268" y="455">Xᵢ</text><text x="296" y="292">εᵢ</text>
                <g class="sm" text-anchor="end"><text x="143" y="237">Observed Value</text><text x="118" y="257">of Y for Xᵢ</text><text x="143" y="318">Predicted Value</text><text x="121" y="338">of Y for Xᵢ</text><text x="137" y="402">Intercept = β₀</text></g>
                <text x="343" y="327">Random Error</text><text x="343" y="350">for this Xᵢ value</text><text x="478" y="290">Slope = β₁</text></g>
            </svg>
          </li>
          <li>
            <div class="num">6<Ico n="star" w="13" /></div>
            <svg class="thumb" viewBox="0 0 624 468">
              <rect class="tb" x="574" width="50" height="468" /><rect class="tl" x="574" y="371" width="50" height="49" />
              <text class="tt" x="38" y="60">Simple linear regression</text>
              <rect x="11" y="78" width="562" height="98" class="bx" />
              <text x="23" y="98">Sample contain <tspan class="bl">n data points</tspan> <tspan class="i">(xᵢ, yᵢ), i = 1, …, n.</tspan></text>
              <text x="23" y="130">•  The <tspan class="bl">point estimates</tspan> for <tspan class="i">β₀, β₁, σ²</tspan>are denoted by <tspan class="i">β̂₀, β̂₁, σ̂².</tspan></text>
              <text x="23" y="166">•  <tspan class="bl">Estimated regression equation</tspan> (best-fit line) is <tspan class="i">ŷ = β̂₀+β̂₁x.</tspan></text>
              <rect x="17" y="198" width="260" height="75" fill="#e7e3c1" stroke="#b5ae62" stroke-width="3" />
              <g class="md"><text x="24" y="220"><tspan class="bl">Question:</tspan> How to find point</text><text x="24" y="241">estimates for <tspan class="i">β₀, β₁, σ²</tspan>  from</text><text x="24" y="262">samples?</text></g>
              <rect x="17" y="275" width="260" height="120" class="bx" />
              <g class="md"><text x="31" y="291">To estimate the regression</text><text x="31" y="311">coefficients, we use <tspan class="bl">Least</tspan></text><text x="31" y="331" class="bl">Squares method, it mean</text><text x="31" y="352">minimize <tspan class="i">SSₑ = ∑ eᵢ²,</tspan></text><text x="31" y="386">where <tspan class="bl">residual</tspan> <tspan class="i">eᵢ = yᵢ − ŷᵢ</tspan></text></g>
              <rect x="277" y="182" width="300" height="250" fill="#fff" /><rect x="288" y="194" width="275" height="219" fill="#fff" stroke="#ccc" stroke-width="2" />
              <path d="M303 365 547 240M318 358v30M341 324v26M387 300v22M368 332v27M413 308v28M438 274v24M463 286v14M512 254v32M522 223v30" stroke="#2b8fe0" stroke-width="3" fill="none" />
              <g fill="#2b8fe0"><circle cx="318" cy="387" r="4" /><circle cx="341" cy="325" r="4" /><circle cx="387" cy="300" r="4" /><circle cx="368" cy="358" r="4" /><circle cx="413" cy="335" r="4" /><circle cx="438" cy="275" r="4" /><circle cx="463" cy="300" r="4" /><circle cx="512" cy="285" r="4" /><circle cx="522" cy="224" r="4" /></g>
              <path d="M503 228l16-3M488 300l-4-28" stroke="#333" stroke-width="2" />
              <g class="sans xs"><text x="428" y="241">Observed value</text><text x="446" y="256">Data (y)</text><text x="480" y="312">Estimated</text><text x="468" y="326">regression line</text><text x="557" y="427">x</text><text x="277" y="203">y</text></g>
            </svg>
          </li>
          <li class="on">
            <div class="num">7<Ico n="star" w="13" /></div>
            <svg class="thumb" viewBox="0 0 931 699">
              <rect class="tb" x="857" width="74" height="699" /><rect class="tl" x="857" y="554" width="74" height="72" />
              <rect x="33" y="138" width="810" height="548" class="bx" /><path d="M33 413H843" stroke="#665f47" stroke-width="4" />
              <rect x="43" y="89" width="800" height="50" fill="#e7e3c1" stroke="#cdc75e" stroke-width="4" />
              <text class="t7" x="49" y="78">Estimated regression line</text><text x="49" y="126" class="b7">Best-fit line</text>
              <Formulas />
              <text v-for="(l, i) in example" :key="l" x="53" :y="438 + i * 31" class="e7"><tspan v-if="!i" class="bl">Example: </tspan>{{ l }}</text>
              <rect x="332" y="602" width="342" height="34" fill="#a9a57c" /><rect x="332" y="640" width="342" height="46" fill="#e0dfd5" />
              <g class="h7"><text x="341" y="628">Mail (x)</text><text x="462" y="628">10</text><text x="519" y="628">12</text><text x="579" y="628">13</text><text x="631" y="628">17</text></g>
              <g class="r7"><text x="341" y="665">Orders (y)</text><text x="462" y="665">8</text><text x="519" y="665">10</text><text x="579" y="665">6</text><text x="631" y="665">10</text></g>
            </svg>
          </li>
          <li>
            <div class="num">8<Ico n="star" w="13" /></div>
            <svg class="thumb" viewBox="0 0 624 468">
              <rect class="tb" x="574" width="50" height="468" /><rect class="tl" x="574" y="371" width="50" height="49" />
              <text class="tt" x="39" y="69">Standard error of estimate</text>
              <rect x="20" y="115" width="550" height="262" class="bx" /><rect x="20" y="86" width="550" height="29" fill="#e7e3c1" stroke="#cdc75e" stroke-width="3" />
              <text x="27" y="107" class="q"><tspan class="bl">Question:</tspan> How well the model describes the data?</text>
              <g class="md bl"><text x="34" y="134">•  Total sum of squares:</text><text x="34" y="203">•  Regression sum of squares:</text><text x="34" y="262">•  Error sum of squares:</text><text x="34" y="335">•  An unbiased estimator of σ² is</text></g>
              <g class="i"><text x="160" y="173">SSₜ = ∑(yᵢ − ȳ)² = ∑yᵢ² −</text><text x="372" y="163" class="md">(∑yᵢ)²</text><text x="388" y="183" class="md">n</text><text x="157" y="233">SSᵣ = ∑(yᵢ − ȳ)² = β̂₁Sₓᵧ</text><text x="168" y="290">SSₑ =</text><text x="215" y="295" class="sum">∑</text><text x="242" y="290">(yᵢ − ŷᵢ)² = SSₜ − SSᵣ</text><text x="248" y="365">σ̂² =</text><text x="296" y="350">SSₑ</text><text x="290" y="376">n − 2</text></g>
              <path d="M372 167h45M290 360h44" stroke="#2f2b20" stroke-width="2" />
              <rect x="20" y="400" width="544" height="46" class="bx" />
              <g class="sm"><text x="34" y="418"><tspan class="bl">Example:</tspan> Find error sum of squares and the estimate of the variance of the</text><text x="34" y="436">random error in the previous example.</text></g>
            </svg>
          </li>
          <li>
            <div class="num">9<Ico n="star" w="13" /></div>
            <svg class="thumb" viewBox="0 0 624 468">
              <rect class="tb" x="574" width="50" height="468" />
              <text class="tt" x="39" y="69">Use Regression in Excel</text>
            </svg>
          </li>
        </ol>
        <div class="vbar left"><Ico n="up" /><span class="knob"></span><Ico n="down" class="end" /></div>
      </aside>

      <div class="editor">
        <div class="stage">
          <div class="canvas">
            <article class="slide">
              <div class="band"><i></i></div>
              <h1>Estimated regression line</h1>
              <h2>Best-fit line</h2>
              <div class="box one"><svg viewBox="33 138 810 275" width="810" height="275"><Formulas /></svg></div>
              <div class="box two">
                <p><template v-for="(l, i) in example" :key="l"><span v-if="!i" class="ex">Example: </span>{{ l }}<br /></template></p>
              </div>
              <table>
                <thead><tr><th scope="row">Mail (x)</th><th>10</th><th>12</th><th>13</th><th>17</th></tr></thead>
                <tbody><tr><td>Orders (y)</td><td>8</td><td>10</td><td>6</td><td>10</td></tr></tbody>
              </table>
            </article>
          </div>
          <div class="vbar right"><Ico n="up" /><span class="knob"></span><Ico n="down" class="end" /><Ico n="dblUp" /><Ico n="dblDown" /></div>
        </div>
        <div class="notes">Click to add notes</div>
      </div>
    </main>

    <footer class="status">
      <span class="s1">Slide 7 of 19</span>
      <Ico n="book" w="19" />
      <span class="s2">English (United States)</span>
      <b><Ico n="access" w="17" />Accessibility: Investigate</b>
      <span class="grow"></span>
      <button class="nb"><Ico n="notes" />Notes</button>
      <button class="vw cur" aria-label="Normal"><Ico n="normal" w="19" /></button>
      <button class="vw" aria-label="Slide sorter"><Ico n="sorter" w="19" /></button>
      <button class="vw" aria-label="Reading view"><Ico n="reading" w="18" /></button>
      <button class="vw" aria-label="Slide show"><Ico n="show" w="16" /></button>
      <span class="pm">−</span>
      <input v-model="zoom" type="range" class="zoom" aria-label="Zoom" />
      <span class="pm">+</span>
      <span class="pct">78%</span>
      <Ico n="fit" w="20" class="fit" />
    </footer>

    <footer class="taskbar">
      <span></span>
      <div class="apps">
        <button v-for="a in apps" :key="a[0]" :class="{ run: a[3] }" :aria-label="a[1]"><Ico :n="a[0]" :w="a[2]" /></button>
      </div>
      <div class="tray">
        <Ico n="trayUp" w="15" />
        <Ico n="cloud" w="21" class="cl" />
        <span class="eng">ENG</span>
        <button class="net" aria-label="Network, volume, battery"><Ico n="wifi" w="21" /><Ico n="volume" w="21" /><Ico n="battery" w="21" /></button>
        <span class="clock">10:56 AM<br />7/21/2024</span>
        <Ico n="bell" w="17" />
      </div>
    </footer>

    <section class="project">
      <header><button aria-label="Back"><Ico n="back" w="17" /></button><h3>Project</h3><kbd><Ico n="winkey" w="11" /></kbd><kbd>P</kbd></header>
      <ul>
        <li v-for="(m, i) in modes" :key="m" :class="{ on: !i }"><button><Proj :m="i" />{{ m }}</button></li>
      </ul>
      <footer><a href="#display">More Display settings</a></footer>
    </section>

    <label class="osd"><Ico n="sun" w="17" /><input v-model="brightness" type="range" aria-label="Brightness" /></label>
  </div>
</template>

<style>
body { margin: 0; background: #525252; overflow: hidden; }
</style>

<style scoped>
* { box-sizing: border-box; }
.screen { position: relative; min-height: 100vh; display: flex; flex-direction: column; background: #525252; color: #252423; font: 14px/20px "Open Sans", "Noto Sans", sans-serif; }
button { border: 0; background: none; padding: 0; color: inherit; font: inherit; display: inline-flex; align-items: center; white-space: nowrap; }
svg { display: block; flex: none; overflow: visible; }
.grow { flex: 1; }

.titlebar { height: 60px; display: grid; grid-template-columns: 1fr 460px 1fr; align-items: center; column-gap: 20px; color: #a3a3a3; padding: 0 0 0 19px; }
.quick { display: flex; align-items: center; white-space: nowrap; margin-right: -20px; }
.autosave { font-size: 13px; margin-left: 21px; width: 62px; }
.toggle { width: 54px; height: 25px; border: 1px solid #a0a0a0; border-radius: 13px; font-size: 13px; gap: 6px; padding-left: 4px; margin-right: 16px; background: #636363; }
.toggle i { width: 18px; height: 18px; border-radius: 50%; background: #a8a8a8; }
.undo { margin-left: 15px; gap: 7px; }
.redo { margin-left: 13px; }
.present { margin-left: 14px; }
.qat { margin-left: 20px; }
.doc { display: flex; align-items: center; gap: 6px; margin-left: 31px; font-size: 14px; }
.search { height: 40px; display: flex; align-items: center; gap: 16px; padding-left: 26px; background: #858585; border: 1px solid #6c6c6c; border-radius: 4px; box-shadow: 0 1px 2px #333; }
.search input { flex: 1; border: 0; background: none; font: 16px/22px "Open Sans", sans-serif; outline: 0; }
.search input::placeholder { color: #565656; opacity: 1; }
.account { display: flex; align-items: center; justify-content: flex-end; font-size: 13px; padding-right: 16px; }
.avatar { width: 30px; height: 30px; border-radius: 50%; background: #d13438; color: #fff; display: grid; place-items: center; margin: 0 16px 0 11px; font-size: 13px; }
.win { width: 60px; justify-content: center; }
.win:last-child { width: 46px; margin-left: 7px; margin-right: -9px; }

.tabs { height: 38px; display: flex; align-items: center; gap: 24px; padding: 0 15px 0 27px; color: #fff; font-size: 16px; }
.tabs button { height: 33px; border-bottom: 3px solid transparent; padding-top: 3px; }
.tabs .file { margin-right: 8px; }
.tabs .active { font-weight: 600; border-color: #f4b7a6; }
.tabs .cbtn { width: 26px; height: 30px; border: 0; padding: 0; border-radius: 4px; background: #bdbdbd; justify-content: center; margin-right: -14px; }
.tabs .share { width: 89px; height: 30px; border: 0; padding: 0; border-radius: 4px; background: #e0946c; color: #252423; gap: 5px; justify-content: center; }

.ribbon { height: 124px; margin: 0 10px; background: #bdbdbd; border-radius: 8px; display: flex; box-shadow: 0 2px 3px #333; position: relative; z-index: 1; }
.grp { position: relative; display: flex; flex-direction: column; padding-top: 6px; flex: none; }
.grp::after { content: ""; position: absolute; right: 0; top: 6px; bottom: 7px; width: 1px; background: #888; }
.body { flex: 1; display: flex; align-items: flex-start; }
h6 { margin: 0; height: 24px; text-align: center; font-size: 12px; line-height: 23px; font-weight: 400; }
.with-launch { padding-right: 20px; }
.grp h6 { color: #252423; }
.launch { position: absolute; right: 4px; bottom: 6px; }
.off { color: #858585; }
.stack { display: flex; flex-direction: column; }
.stack button { height: 32px; gap: 5px; color: inherit; }
.big { flex-direction: column; line-height: 20px; }
.big span { text-align: center; }
.big span svg { display: inline-block; }
.body.col, .col { flex-direction: column; }
.row { display: flex; align-items: center; height: 40px; }
.col .r1 { padding-top: 3px; height: 42px; }
.col .r2 { height: 38px; }
.bar { width: 1px; height: 30px; background: #909090; }
.dd { gap: 8px; }
.clip { width: 129px; }
.clip .body { padding-left: 22px; gap: 12px; margin-top: -3px; }
.clip .big { width: 40px; padding-top: 7px; }
.clip .big span { margin-top: 6px; }
.clip .wide { margin-left: 3px; }
.slides { width: 178px; }
.slides .body, .draw .body, .edit .body, .addin .body { margin-top: -3px; }
.slides .big { width: 52px; padding-top: 4px; margin-left: 10px; }
.slides .big span { margin-top: 8px; }
.slides .stack { margin-left: 7px; }
.font { width: 387px; }
.font .body { padding-left: 10px; }
.pick { position: relative; display: inline-flex; margin-right: 3px; }
.pick select { appearance: none; height: 30px; width: 208px; border: 1px solid #888; border-radius: 4px; background: #adadad; color: #858585; font: 14px/20px "Open Sans", sans-serif; padding: 0 3px; opacity: 1; }
.pick.size select { width: 57px; }
.pick svg { position: absolute; right: 3px; top: 10px; }
.font .r1 button { margin-left: 4px; width: 26px; margin-right: 2px; }
.font .r1 .bar { margin-right: 3px; }
.ch { width: 31px; justify-content: center; font-size: 16px; }
.it { font: italic 17px/20px "Liberation Serif", serif; }
.ab { width: 37px; font-size: 14px; }
.font .r2 .dd { margin-left: 12px; gap: 7px; }
.font .r2 .ab + .dd { margin-left: 4px; }
.font .r2 .aa { font-size: 16px; margin-left: 14px; margin-right: 10px; }
.font .r2 .bar + .dd { margin-left: 9px; }
.para { width: 431px; }
.para .body { padding-left: 15px; }
.para .body > .col { width: 226px; }
.para .r1 .dd { margin-right: 12px; gap: 9px; }
.para .r1 .bar { margin: 0 8px 0 -4px; }
.para .r1 .bar + button { margin-right: 12px; }
.para .r1 button + .bar { margin-left: 0; }
.para .r1 .dd + .bar { margin-left: -4px; }
.para .r1 .bar + .dd { margin-right: 0; }
.para .r2 { gap: 12px; }
.para .r2 .bar { margin: 0 -3px 0 -5px; }
.para .stack { margin-top: -3px; margin-left: -2px; }
.draw { width: 455px; }
.gallery { display: flex; width: 165px; height: 78px; border: 1px solid #888; border-radius: 4px; margin: 11px 0 0 11px; }
.cells { display: grid; grid-template-columns: repeat(6, 24px); padding-left: 1px; width: 146px; grid-auto-rows: 24px; padding-top: 2px; }
.cells button { justify-content: center; }
.scroll { display: grid; grid-template-rows: 1fr 1fr 1fr; width: 18px; border-left: 1px solid #777; }
.scroll button { justify-content: center; border-bottom: 1px solid #777; }
.scroll button:last-child { border: 0; }
.dim { color: #888; }
.draw .big { width: 56px; margin-left: 8px; padding-top: 7px; }
.draw .big + .big { margin-left: 4px; }
.draw .big span, .addin .big span { margin-top: 5px; }
.draw .stack { margin-left: 7px; }
.edit { width: 135px; }
.edit .stack { margin-left: 16px; }
.edit .wide { margin-left: 10px; }
.addin { width: 77px; }
.addin .big { width: 76px; padding-top: 7px; }
.collapse { position: absolute; right: 12px; bottom: 10px; }

.work { flex: 1; display: flex; min-height: 0; height: 771px; }
.thumbs { width: 303px; display: flex; border-right: 1px solid #929292; }
.thumbs ol { list-style: none; margin: 0; padding: 13px 0 0; flex: 1; height: 771px; overflow: hidden; }
.thumbs li { height: 182px; display: flex; }
.num { width: 45px; color: #fff; font-size: 18px; line-height: 20px; padding-left: 14px; margin-top: -6px; height: 60px; }
.num svg { margin-top: 4px; margin-left: -1px; }
.thumb { width: 207px; height: 155px; border-radius: 5px; outline: 1px solid #8c8c8c; background: radial-gradient(ellipse 75% 80% at 55% 45%, #fff 75%, #d9d9d9 115%); font-family: "Liberation Serif", serif; font-size: 22px; fill: #3d392d; overflow: hidden; }
.on .thumb { outline: 3px solid #ffc1ae; outline-offset: 1px; }
.tb { fill: #665f47; }
.tl { fill: #a9a57c; }
.tt { font-size: 29px; fill: #0a7a12; }
.t5 { font-size: 31px; }
.bx { fill: #fff; stroke: #665f47; stroke-width: 3px; }
.dark { stroke: #222; }
.bl { fill: #2a62b8; }
.i { font-style: italic; }
.md { font-size: 18px; }
.sm { font-size: 17px; }
.xs { font-size: 12px; }
.lg { font-size: 25px; }
.q { font-size: 15px; font-weight: 700; }
.sum { font-size: 36px; font-style: normal; }
.sans { font-family: "Liberation Sans", sans-serif; font-size: 21px; }
.sans.xs { font-size: 12px; }
.ax { fill: none; stroke: #2f2b20; stroke-width: 5px; }
.thin, .ar { stroke: #2f2b20; stroke-width: 2px; fill: none; }
.t7 { font-size: 43px; fill: #0a7a12; }
.b7 { font-size: 30px; }
.e7 { font-size: 28px; }
.h7 { font-size: 23px; font-weight: 700; }
.r7 { font-size: 23px; }

.vbar { display: flex; flex-direction: column; align-items: center; background: #3a3a3a; padding: 6px 0; border-radius: 10px; width: 20px; }
.vbar.left { margin-right: 4px; }
.knob { width: 11px; height: 160px; border-radius: 5px; background: #c4c4c4; margin-top: 160px; }
.vbar .end { margin-top: auto; }
.vbar.right { border-radius: 0; width: 22px; padding-bottom: 27px; }
.right .knob { height: 32px; margin-top: 202px; }
.right .end ~ svg { margin-top: 10px; }
.right .end ~ svg ~ svg { margin-top: 6px; }
.editor { flex: 1; display: flex; flex-direction: column; min-width: 0; }
.stage { flex: 1; display: flex; border-bottom: 1px solid #999; }
.canvas { flex: 1; display: flex; justify-content: center; padding: 13px 0 14px 2px; }
.notes { height: 42px; padding: 9px 14px; color: #e6e6e6; font-size: 17px; line-height: 22px; }
.slide { position: relative; width: 932px; height: 700px; border: 1px solid #999; background: radial-gradient(ellipse 68% 72% at 52% 42%, #fff 82%, #dadada 118%); font-family: "Liberation Serif", "Times New Roman", serif; color: #2f2b20; overflow: hidden; }
.band { position: absolute; right: 0; top: 0; bottom: 0; width: 70px; background: #665f47; }
.band i { position: absolute; left: 0; right: 0; top: 554px; height: 72px; background: #a9a57c; }
.slide h1 { margin: 0; padding: 35px 0 0 48px; height: 88px; font-size: 44px; line-height: 54px; font-weight: 400; color: #008000; position: relative; }
.slide h2 { position: relative; z-index: 1; margin: 0 0 0 38px; width: 805px; height: 49px; padding-left: 9px; font-size: 31px; line-height: 47px; font-weight: 400; background: #e7e3c1; border: 1px solid #cdc75e; }
.box { position: relative; width: 812px; margin-left: 31px; background: #fff; border: 1px solid #665f47; box-shadow: 4px 4px 5px #666; }
.box.one { height: 277px; margin-top: -1px; }
.box.two { height: 274px; margin-top: -1px; }
.box p { margin: 0; padding: 2px 0 0 20px; font-size: 28px; line-height: 31px; white-space: nowrap; overflow: hidden; }
.ex { color: #0070c0; }
table { position: absolute; left: 331px; top: 601px; border-collapse: collapse; table-layout: fixed; width: 343px; font-size: 23px; line-height: 28px; }
th, td { text-align: left; vertical-align: top; padding: 5px 0 0 9px; border-right: 2px solid #fff; width: 52px; }
th:first-child { width: 122px; }
th:nth-child(2) { width: 56px; }
th:nth-child(3) { width: 61px; }
th { height: 36px; background: #a9a57c; border-bottom: 4px solid #fff; }
td { height: 49px; background: #e0dfd5; }
th:last-child, td:last-child { border-right: 0; }

.status { height: 27px; border-top: 1px solid #3c3c3c; display: flex; align-items: center; color: #fff; font-size: 12px; padding: 0 5px 0 15px; white-space: nowrap; }
.s1 { width: 97px; }
.s2 { margin-left: 20px; width: 151px; }
.status b { display: flex; align-items: center; gap: 4px; font-weight: 700; }
.nb { gap: 2px; margin-right: 22px; }
.vw { width: 50px; height: 26px; justify-content: center; }
.cur { background: #616161; }
.pm { font-size: 18px; color: #bbb; width: 16px; text-align: center; font-weight: 300; }
.zoom { appearance: none; width: 125px; height: 20px; margin: 0 4px; background: linear-gradient(#aaa, #aaa) 62px 4px / 1px 12px no-repeat, linear-gradient(#999, #999) 0 9px / 100% 1px no-repeat; }
.vw:nth-of-type(5) { margin-right: 3px; }
.zoom::-webkit-slider-thumb { appearance: none; width: 6px; height: 15px; background: #bbb; }
.pct { color: #bbb; margin: 0 17px 0 12px; }

.taskbar { height: 60px; border-top: 1px solid #4a4a4a; display: grid; grid-template-columns: 1fr auto 1fr; align-items: center; color: #fff; background: linear-gradient(90deg, #1b2937 0, #1a2634 38%, #271f19 50%, #2d2116 75%, #2e1f15 100%); }
.apps { display: flex; height: 58px; }
.apps button { width: 55px; justify-content: center; position: relative; }
.run::after { content: ""; position: absolute; bottom: 5px; left: 24px; width: 8px; height: 4px; border-radius: 2px; background: #a0a0a0; }
.tray { display: flex; align-items: center; justify-content: flex-end; padding-right: 26px; font-size: 14px; }
.cl { margin: 0 24px 0 22px; }
.net { width: 100px; height: 50px; border-radius: 5px; background: #3c2e24; justify-content: center; gap: 9px; margin: 0 11px 0 12px; }
.clock { text-align: right; line-height: 20px; margin-right: 11px; width: 70px; white-space: nowrap; }

.project { position: absolute; right: 16px; bottom: 76px; width: 448px; height: 611px; z-index: 3; border-radius: 9px; border: 1px solid #4c4c4c; background: linear-gradient(90deg, #2c2a28, #292929); color: #d2d2d2; display: flex; flex-direction: column; overflow: hidden; box-shadow: 0 6px 16px rgba(0, 0, 0, .4); }
.project header { display: flex; align-items: center; height: 58px; padding: 0 16px; }
h3 { margin: 0 10px 0 22px; font-size: 16px; font-weight: 600; color: #fff; }
kbd { width: 20px; height: 20px; border: 1px solid #484848; border-radius: 4px; display: grid; place-items: center; margin-right: 5px; font: 13px/18px "Open Sans", sans-serif; }
.project ul { list-style: none; margin: 11px 9px 0 0; padding: 0; flex: 1; }
.project li { height: 67px; margin-bottom: 6px; border-radius: 4px; position: relative; }
.project li.on { background: #343332; }
.project li.on::before { content: ""; position: absolute; left: 0; top: 22px; width: 4px; height: 23px; border-radius: 2px; background: #3c9fd8; }
.project li button { height: 67px; padding-left: 15px; gap: 15px; font-size: 16px; padding-top: 4px; }
.project li svg { margin-top: -6px; }
.project > footer { height: 60px; background: #222; border-top: 1px solid #1c1c1c; padding: 18px 15px; }
.project a { color: #c4c4c4; text-decoration: none; font-size: 14px; }

.osd { position: absolute; left: 50%; margin-left: -108px; bottom: 77px; width: 216px; height: 59px; border-radius: 8px; background: #2d2d2d; border: 1px solid #3a3a3a; z-index: 3; display: flex; align-items: center; padding: 0 19px 0 20px; gap: 20px; box-shadow: 0 6px 14px rgba(0, 0, 0, .35); }
.osd input { appearance: none; flex: 1; min-width: 0; height: 5px; border-radius: 2px; background: #3fb9fb; margin: 0; }
.osd input::-webkit-slider-thumb { appearance: none; width: 5px; height: 5px; border-radius: 2px; background: #3fb9fb; }
</style>
